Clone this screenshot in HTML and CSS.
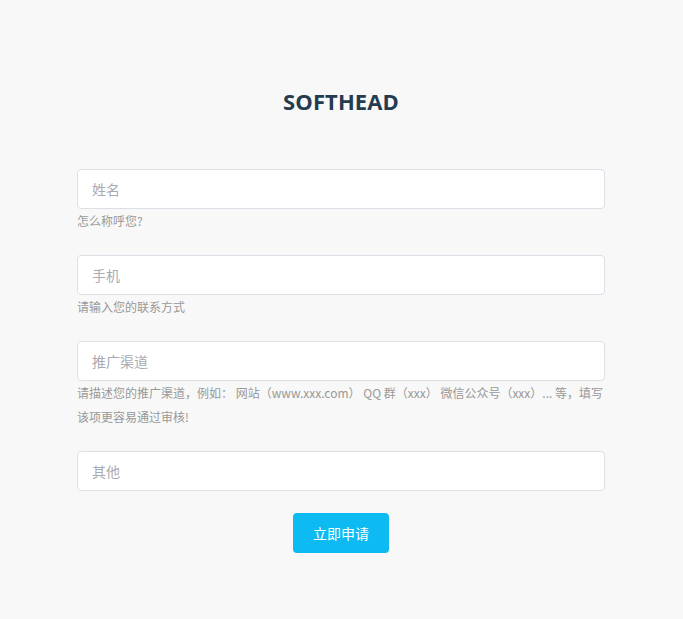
FILE: index.html
```html
<!DOCTYPE html>
<html lang="zh">
<head>
<meta charset="utf-8">
<link rel="stylesheet" href="styles.css">
</head>
<body>
<div class="wrap">
  <h1 class="title">SOFTHEAD</h1>
  <form class="form">
    <div class="field">
      <input class="input" type="text" placeholder="姓名">
      <p class="help">怎么称呼您?</p>
    </div>
    <div class="field">
      <input class="input" type="text" placeholder="手机">
      <p class="help">请输入您的联系方式</p>
    </div>
    <div class="field">
      <input class="input" type="text" placeholder="推广渠道">
      <p class="help">请描述您的推广渠道，例如： 网站（www.xxx.com） QQ 群（xxx） 微信公众号（xxx）... 等，填写该项更容易通过审核!</p>
    </div>
    <div class="field last">
      <input class="input" type="text" placeholder="其他">
    </div>
    <div class="actions">
      <button class="btn" type="button">立即申请</button>
    </div>
  </form>
</div>
</body>
</html>
```
FILE: styles.css
```css
html, body {
  margin: 0;
  padding: 0;
  background: #f8f8f8;
}
body {
  font-family: "Open Sans", "Noto Sans CJK SC", sans-serif;
  color: #333;
}
.wrap {
  width: 529px;
  box-sizing: border-box;
  padding-right: 1px;
  margin: 0 auto;
  padding-top: 86px;
}
.title {
  margin: 0 0 53px;
  text-align: center;
  font-size: 22px;
  line-height: 30px;
  font-weight: 700;
  letter-spacing: 0.1px;
  color: #243b50;
  font-family: "Open Sans", sans-serif;
}
.form {
  display: flex;
  flex-direction: column;
}
.field {
  margin-bottom: 22px;
}
.input {
  display: block;
  box-sizing: border-box;
  width: 100%;
  height: 40px;
  padding: 0 14px;
  border: 1px solid #dcdfe6;
  border-radius: 4px;
  background: #fff;
  font-family: "Noto Sans CJK SC", sans-serif;
  font-size: 14px;
  color: #333;
  outline: none;
}
.input::placeholder {
  color: #a8abb2;
}
.help {
  margin: 0;
  font-family: "Noto Sans CJK SC", sans-serif;
  font-size: 12px;
  line-height: 24px;
  color: #999;
}
.actions {
  display: flex;
  justify-content: center;
}
.btn {
  width: 96px;
  height: 40px;
  border: none;
  border-radius: 4px;
  background: #0dbaf2;
  color: #fff;
  font-family: "Noto Sans CJK SC", sans-serif;
  font-size: 14px;
  cursor: pointer;
}
```
